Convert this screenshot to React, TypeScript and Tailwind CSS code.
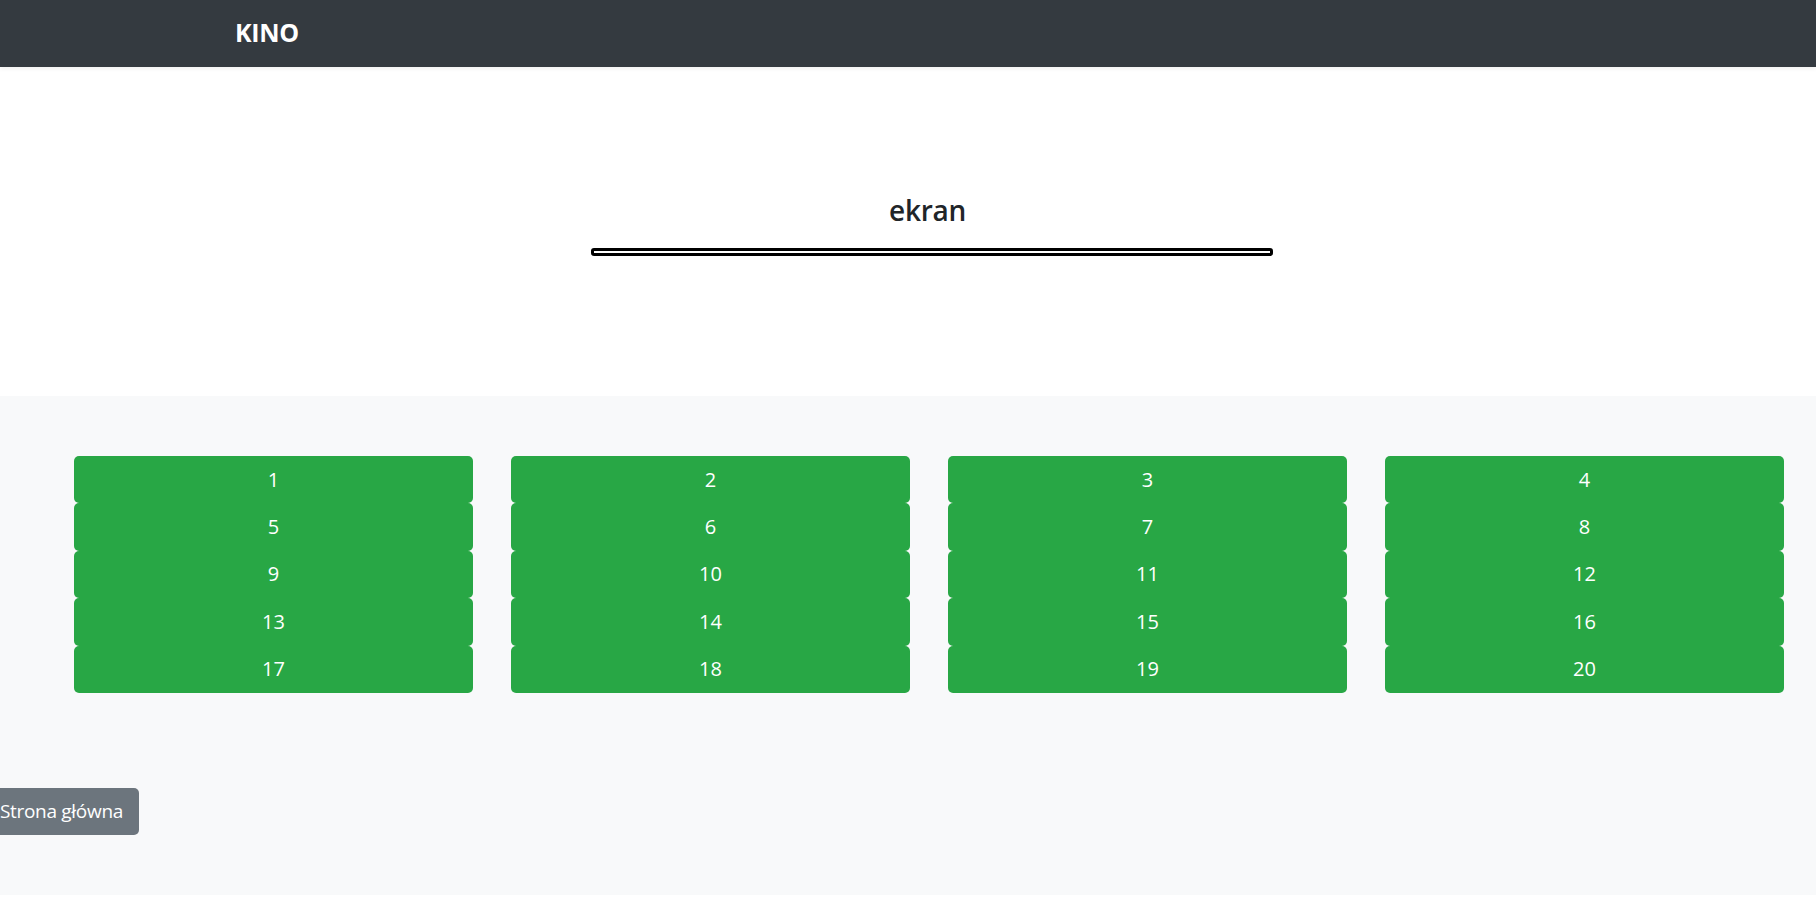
const seats = Array.from({ length: 20 }, (_, i) => i + 1);

const Navbar = () => {
  return (
    <nav className="h-[67px] bg-[#343a40] flex items-center pl-[235px] shadow-[0_2px_4px_rgba(0,0,0,0.06)] relative">
      <span className="text-white text-[25px] font-bold leading-none pb-[3px] tracking-[-0.3px]">KINO</span>
    </nav>
  );
};

const Screen = () => {
  return (
    <section className="h-[329px] bg-white pt-[127px]">
      <div className="w-[682px] ml-[591px] flex flex-col items-center">
        <h3 className="text-[28px] font-semibold leading-[1.2] text-[#212529] mb-[20px] -ml-[9px] tracking-[-0.3px]">ekran</h3>
        <div className="w-full h-[8px] border-[3px] border-black rounded-[3px] bg-white" />
      </div>
    </section>
  );
};

const SeatGrid = () => {
  return (
    <div className="ml-[74px] w-[1710px] grid grid-cols-4 gap-x-[38px]">
      {seats.map((n) => (
        <button
          key={n}
          className="h-[47.4px] w-full bg-[#28a745] text-white text-[20px] rounded-[5px] flex items-center justify-center"
        >
          {n}
        </button>
      ))}
    </div>
  );
};

export default function App() {
  return (
    <div className="min-h-[903px] bg-white overflow-hidden" style={{ fontFamily: '"Open Sans", "Noto Sans", sans-serif' }}>
      <Navbar />
      <Screen />
      <section className="h-[499px] bg-[#f8f9fa] pt-[60px]">
        <SeatGrid />
        <div className="mt-[95px] w-[139px] flex justify-end">
          <button className="shrink-0 h-[47px] pl-[14px] pr-[16px] bg-[#6c757d] text-white text-[19px] tracking-[-0.3px] rounded-[5px] whitespace-nowrap">
            Strona główna
          </button>
        </div>
      </section>
    </div>
  );
}
